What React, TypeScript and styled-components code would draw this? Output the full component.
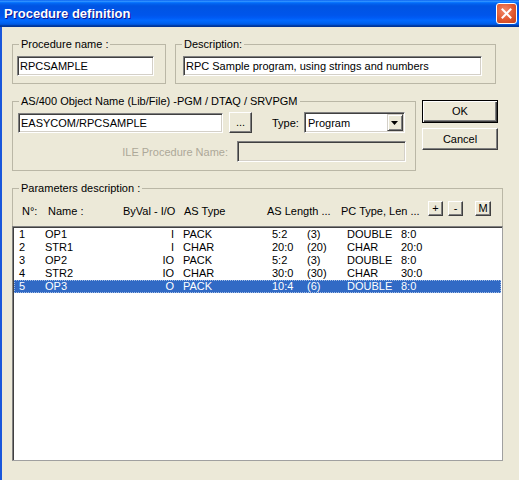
import React from "react";
import styled, { createGlobalStyle } from "styled-components";

const Global = createGlobalStyle`
  html, body {
    margin: 0;
    padding: 0;
    background: #ECE9D8;
  }
  body {
    font-family: "Liberation Sans", Arial, sans-serif;
    font-size: 11px;
    color: #000;
  }
`;

const Window = styled.div`
  width: 519px;
  height: 480px;
  overflow: hidden;
  display: flex;
  flex-direction: column;
  background: #ECE9D8;
`;

const TitleBar = styled.div`
  flex: none;
  height: 27px;
  display: flex;
  align-items: center;
  justify-content: space-between;
  padding: 0 2px 0 4px;
  background: linear-gradient(
    180deg,
    #0058ee 0%,
    #3593ff 4%,
    #288eff 6%,
    #127dff 8%,
    #036ffc 10%,
    #0262ee 14%,
    #0057e5 20%,
    #0054e3 24%,
    #0055eb 56%,
    #005bf5 66%,
    #026afe 76%,
    #0062ef 86%,
    #0052d6 92%,
    #0040ab 94%,
    #003092 100%
  );
`;

const Title = styled.span`
  color: #fff;
  font-weight: bold;
  font-size: 13px;
  text-shadow: 1px 1px #0f1089;
`;

const CloseBtn = styled.div`
  width: 21px;
  height: 21px;
  box-sizing: border-box;
  border: 1px solid #fff;
  border-radius: 3px;
  background: radial-gradient(circle at 40% 35%, #f08a6c 0%, #e2582f 55%, #c0401c 100%);
  display: flex;
  align-items: center;
  justify-content: center;
`;

const Body = styled.div`
  flex: 1;
  min-height: 0;
  box-sizing: border-box;
  border-left: 2px solid #1a57db;
  padding: 11px 0 19px 10px;
  display: flex;
  flex-direction: column;
  gap: 11px;
`;

const Row = styled.div<{ $gap: number }>`
  flex: none;
  display: flex;
  align-items: flex-start;
  gap: ${(p) => p.$gap}px;
`;

const Group = styled.fieldset<{ $w: number; $fill?: boolean }>`
  width: ${(p) => p.$w}px;
  box-sizing: border-box;
  min-width: 0;
  min-height: 0;
  flex: ${(p) => (p.$fill ? "1 1 0" : "none")};
  display: flex;
  flex-direction: column;
  margin: 0;
  padding: 0;
  border: 1px solid #bab7a6;
`;

const Legend = styled.legend`
  margin-left: 6px;
  padding: 0 2px;
  font-size: 11px;
  line-height: 13px;
`;

const GroupBody = styled.div<{ $pad: string }>`
  padding: ${(p) => p.$pad};
  display: flex;
  flex-direction: column;
  gap: 8px;
`;

const Line = styled.div<{ $end?: boolean }>`
  display: flex;
  align-items: center;
  justify-content: ${(p) => (p.$end ? "flex-end" : "flex-start")};
`;

const Field = styled.input<{ $w: number; $h?: number; $ml?: number }>`
  width: ${(p) => p.$w}px;
  height: ${(p) => p.$h ?? 20}px;
  box-sizing: border-box;
  margin: 0 0 0 ${(p) => p.$ml ?? 0}px;
  padding: 0 2px;
  font: inherit;
  color: #000;
  background: ${(p) => (p.disabled ? "#ECE9D8" : "#fff")};
  border: 1px solid;
  border-color: #808080 #fff #fff #808080;
  box-shadow: inset 1px 1px #404040, inset -1px -1px #d4d0c8;
  outline: none;
`;

const Label = styled.span<{ $ml?: number; $disabled?: boolean }>`
  margin-left: ${(p) => p.$ml ?? 0}px;
  color: ${(p) => (p.$disabled ? "#aca899" : "#000")};
  white-space: nowrap;
`;

const Button = styled.button<{ $w: number; $h: number; $ml?: number; $default?: boolean }>`
  width: ${(p) => p.$w}px;
  height: ${(p) => p.$h}px;
  flex: none;
  margin: 0 0 0 ${(p) => p.$ml ?? 0}px;
  padding: 0;
  box-sizing: border-box;
  font: inherit;
  line-height: 1;
  color: #000;
  background: #ECE9D8;
  border: 1px solid;
  border-color: ${(p) => (p.$default ? "#000" : "#fff #404040 #404040 #fff")};
  box-shadow: ${(p) =>
    p.$default
      ? "inset 1px 1px #fff, inset -1px -1px #404040, inset -2px -2px #808080"
      : "inset -1px -1px #808080"};
  display: flex;
  align-items: center;
  justify-content: center;
`;

const Select = styled.div<{ $w: number; $ml: number }>`
  width: ${(p) => p.$w}px;
  height: 21px;
  margin-left: ${(p) => p.$ml}px;
  box-sizing: border-box;
  padding: 1px;
  background: #fff;
  border: 1px solid;
  border-color: #808080 #fff #fff #808080;
  box-shadow: inset 1px 1px #404040, inset -1px -1px #d4d0c8;
  display: flex;
  align-items: center;
`;

const SelectText = styled.span`
  flex: 1;
  padding-left: 2px;
`;

const ArrowBtn = styled.div`
  width: 16px;
  height: 17px;
  box-sizing: border-box;
  background: #ECE9D8;
  border: 1px solid;
  border-color: #d4d0c8 #404040 #404040 #d4d0c8;
  box-shadow: inset 1px 1px #fff, inset -1px -1px #808080;
  display: flex;
  align-items: center;
  justify-content: center;
`;

const Side = styled.div`
  width: 76px;
  margin-top: 5px;
  display: flex;
  flex-direction: column;
  gap: 5px;
`;

const Header = styled.div`
  flex: none;
  display: flex;
  align-items: flex-end;
  padding: 6px 0 8px 9px;
`;

const HeadCell = styled.span<{ $w: number }>`
  width: ${(p) => p.$w}px;
  flex: none;
  line-height: 13px;
  white-space: nowrap;
`;

const ToolBtn = styled(Button)`
  margin-bottom: 2px;
  padding-bottom: 1px;
`;

const List = styled.div`
  flex: 1 1 0;
  min-height: 0;
  overflow: hidden;
  margin: 0 -1px -1px -1px;
  box-sizing: border-box;
  padding: 1px;
  background: #fff;
  border: 1px solid;
  border-color: #808080 #a0a0a0 #a0a0a0 #808080;
  box-shadow: inset 1px 1px #404040;
`;

const ListRow = styled.div<{ $selected?: boolean }>`
  display: grid;
  grid-template-columns: 26px 105px 24px 98px 35px 40px 54px 1fr;
  height: 13px;
  line-height: 13px;
  padding-left: 5px;
  white-space: nowrap;
  background: ${(p) => (p.$selected ? "#316ac5" : "transparent")};
  color: ${(p) => (p.$selected ? "#fff" : "#000")};
  outline: ${(p) => (p.$selected ? "1px dotted rgba(255,255,255,0.55)" : "none")};
  outline-offset: -1px;
`;

const Cell = styled.span<{ $right?: boolean; $pl?: number }>`
  text-align: ${(p) => (p.$right ? "right" : "left")};
  padding-left: ${(p) => p.$pl ?? 0}px;
`;

const params = [
  { n: "1", name: "OP1", io: "I", type: "PACK", len: "5:2", bytes: "(3)", pc: "DOUBLE", pclen: "8:0" },
  { n: "2", name: "STR1", io: "I", type: "CHAR", len: "20:0", bytes: "(20)", pc: "CHAR", pclen: "20:0" },
  { n: "3", name: "OP2", io: "IO", type: "PACK", len: "5:2", bytes: "(3)", pc: "DOUBLE", pclen: "8:0" },
  { n: "4", name: "STR2", io: "IO", type: "CHAR", len: "30:0", bytes: "(30)", pc: "CHAR", pclen: "30:0" },
  { n: "5", name: "OP3", io: "O", type: "PACK", len: "10:4", bytes: "(6)", pc: "DOUBLE", pclen: "8:0" },
];

const App: React.FC = () => {
  return (
    <Window>
      <Global />
      <TitleBar>
        <Title>Procedure definition</Title>
        <CloseBtn>
          <svg width="11" height="11" viewBox="0 0 11 11">
            <path d="M1.5 1.5 L9.5 9.5 M9.5 1.5 L1.5 9.5" stroke="#fff" strokeWidth="2" strokeLinecap="square" />
          </svg>
        </CloseBtn>
      </TitleBar>

      <Body>
        <Row $gap={9}>
          <Group $w={154}>
            <Legend>Procedure name :</Legend>
            <GroupBody $pad="5px 0 7px 4px">
              <Field $w={137} value="RPCSAMPLE" readOnly />
            </GroupBody>
          </Group>
          <Group $w={321}>
            <Legend>Description:</Legend>
            <GroupBody $pad="5px 0 7px 7px">
              <Field $w={299} value="RPC Sample program, using strings and numbers" readOnly />
            </GroupBody>
          </Group>
        </Row>

        <Row $gap={6}>
          <Group $w={404}>
            <Legend>AS/400 Object Name (Lib/File) -PGM / DTAQ / SRVPGM</Legend>
            <GroupBody $pad="4px 9px 8px 5px">
              <Line>
                <Field $w={205} $h={20} value="EASYCOM/RPCSAMPLE" readOnly />
                <Button $w={23} $h={21} $ml={6}>...</Button>
                <Label $ml={20}>Type:</Label>
                <Select $w={101} $ml={5}>
                  <SelectText>Program</SelectText>
                  <ArrowBtn>
                    <svg width="7" height="4" viewBox="0 0 7 4">
                      <path d="M0 0 H7 L3.5 4 Z" fill="#000" />
                    </svg>
                  </ArrowBtn>
                </Select>
              </Line>
              <Line $end>
                <Label $disabled>ILE Procedure Name:</Label>
                <Field $w={169} $h={21} $ml={9} disabled value="" readOnly />
              </Line>
            </GroupBody>
          </Group>
          <Side>
            <Button $w={76} $h={23} $default>OK</Button>
            <Button $w={76} $h={22}>Cancel</Button>
          </Side>
        </Row>

        <Group $w={491} $fill>
          <Legend>Parameters description :</Legend>
          <Header>
            <HeadCell $w={26}>N°:</HeadCell>
            <HeadCell $w={75}>Name :</HeadCell>
            <HeadCell $w={61}>ByVal - I/O</HeadCell>
            <HeadCell $w={83}>AS Type</HeadCell>
            <HeadCell $w={74}>AS Length ...</HeadCell>
            <HeadCell $w={87}>PC Type, Len ...</HeadCell>
            <ToolBtn $w={15} $h={15}>+</ToolBtn>
            <ToolBtn $w={15} $h={15} $ml={5}>-</ToolBtn>
            <ToolBtn $w={16} $h={15} $ml={12}>M</ToolBtn>
          </Header>
          <List>
            {params.map((p, i) => (
              <ListRow key={p.n} $selected={i === params.length - 1}>
                <Cell>{p.n}</Cell>
                <Cell>{p.name}</Cell>
                <Cell $right>{p.io}</Cell>
                <Cell $pl={9}>{p.type}</Cell>
                <Cell>{p.len}</Cell>
                <Cell>{p.bytes}</Cell>
                <Cell>{p.pc}</Cell>
                <Cell>{p.pclen}</Cell>
              </ListRow>
            ))}
          </List>
        </Group>
      </Body>
    </Window>
  );
};

export default App;
